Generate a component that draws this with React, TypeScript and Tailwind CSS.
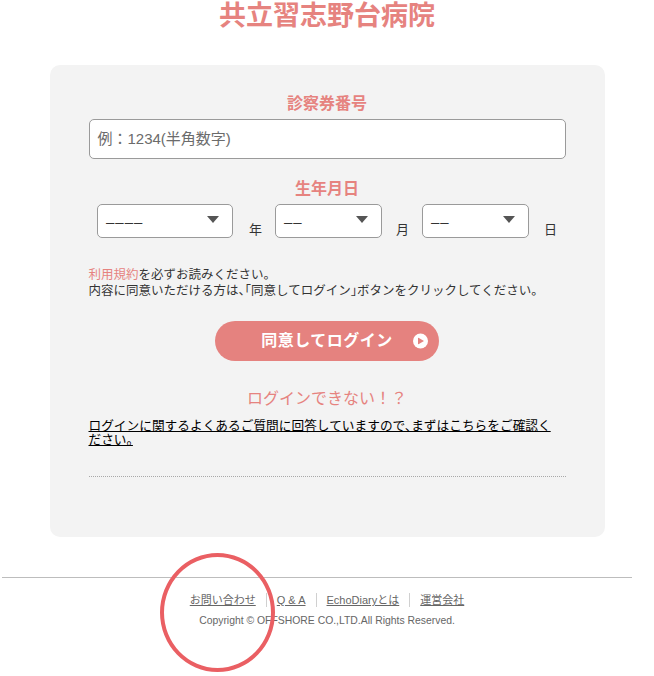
import React from "react";

const Caret = () => (
  <svg width="12" height="7" viewBox="0 0 12 7" className="block">
    <path d="M0 0 H12 L6 7 Z" fill="#555" />
  </svg>
);

function Select({ w, text }: { w: string; text: string }) {
  return (
    <div
      className={`${w} h-[34px] bg-white border border-[#9a9a9a] rounded-[5px] flex items-center justify-between pl-[8px] pr-[13px]`}
    >
      <span className="text-[15px] leading-none text-[#333] font-['Liberation_Sans',sans-serif] tracking-[1px]">
        {text}
      </span>
      <span className="-mt-[4px]">
        <Caret />
      </span>
    </div>
  );
}

export default function App() {
  return (
    <div className="relative w-full min-h-[676px] bg-white font-['Liberation_Sans','Noto_Sans_CJK_JP',sans-serif] text-[#333]">
      <h1 className="text-center text-[27px] leading-[30px] font-bold text-[#e6837f] pt-[1px]">
        共立習志野台病院
      </h1>

      <div className="mx-auto mt-[34px] w-[555px] bg-[#f3f3f3] rounded-[10px] px-[39px] pt-[27px] pb-[60px]">
        <div className="text-center text-[16px] leading-[24px] font-bold text-[#e6837f]">
          診察券番号
        </div>
        <div className="mt-[3px] h-[40px] bg-white border border-[#9a9a9a] rounded-[5px] flex items-center pl-[8px]">
          <span className="text-[15px] text-[#6b6b6b]">例：1234(半角数字)</span>
        </div>

        <div className="mt-[18px] text-center text-[16px] leading-[24px] font-bold text-[#e6837f]">
          生年月日
        </div>
        <div className="mt-[3px] flex items-end justify-center">
          <Select w="w-[136px]" text="––––" />
          <span className="ml-[16px] text-[13px] leading-[16px] text-[#333]">年</span>
          <Select w="ml-[13px] w-[107px]" text="––" />
          <span className="ml-[14px] text-[13px] leading-[16px] text-[#333]">月</span>
          <Select w="ml-[13px] w-[107px]" text="––" />
          <span className="ml-[15px] text-[13px] leading-[16px] text-[#333]">日</span>
        </div>

        <p className="mt-[29px] text-[12.5px] leading-[16px] text-[#333] [font-feature-settings:'halt']">
          <span className="text-[#e6837f]">利用規約</span>を必ずお読みください。
          <br />
          内容に同意いただける方は、「同意してログイン」ボタンをクリックしてください。
        </p>

        <div className="mt-[22px] flex justify-center">
          <button className="relative w-[224px] h-[40px] rounded-full bg-[#e5827f] flex items-center justify-center">
            <span className="text-[16px] font-bold text-white tracking-[0.5px]">同意してログイン</span>
            <span className="absolute right-[11px] top-1/2 -translate-y-1/2 w-[15px] h-[15px] rounded-full bg-white flex items-center justify-center">
              <svg width="6" height="7" viewBox="0 0 6 7" className="ml-[1px]">
                <path d="M0 0 L6 3.5 L0 7 Z" fill="#e5827f" />
              </svg>
            </span>
          </button>
        </div>

        <div className="mt-[26px] text-center text-[16px] leading-[24px] text-[#e6837f]">
          ログインできない！？
        </div>
        <p className="mt-[8px] w-[466px] text-[12.7px] leading-[14px] text-black underline [font-feature-settings:'halt']">
          ログインに関するよくあるご質問に回答していますので、まずはこちらをご確認ください。
        </p>

        <div className="mt-[29px] border-t border-dotted border-[#a8a8a8]" />
      </div>

      <div className="mt-[40px] ml-[2px] w-[630px] border-t border-[#bdbdbd]" />

      <div className="mt-[15px] flex items-center justify-center text-[11px] leading-[14px] text-[#666]">
        <a className="underline">お問い合わせ</a>
        <span className="mx-[10px] w-px h-[14px] bg-[#d0d0d0]" />
        <a className="underline">Q &amp; A</a>
        <span className="mx-[10px] w-px h-[14px] bg-[#d0d0d0]" />
        <a className="underline">EchoDiaryとは</a>
        <span className="mx-[10px] w-px h-[14px] bg-[#d0d0d0]" />
        <a className="underline">運営会社</a>
      </div>
      <div className="mt-[7px] text-center text-[10.4px] leading-[14px] text-[#666]">
        Copyright © OFFSHORE CO.,LTD.All Rights Reserved.
      </div>

      <div className="absolute left-[160px] top-[553px] w-[115px] h-[119px] rounded-[50%] border-[4px] border-[#ea5f63] pointer-events-none" />
    </div>
  );
}
